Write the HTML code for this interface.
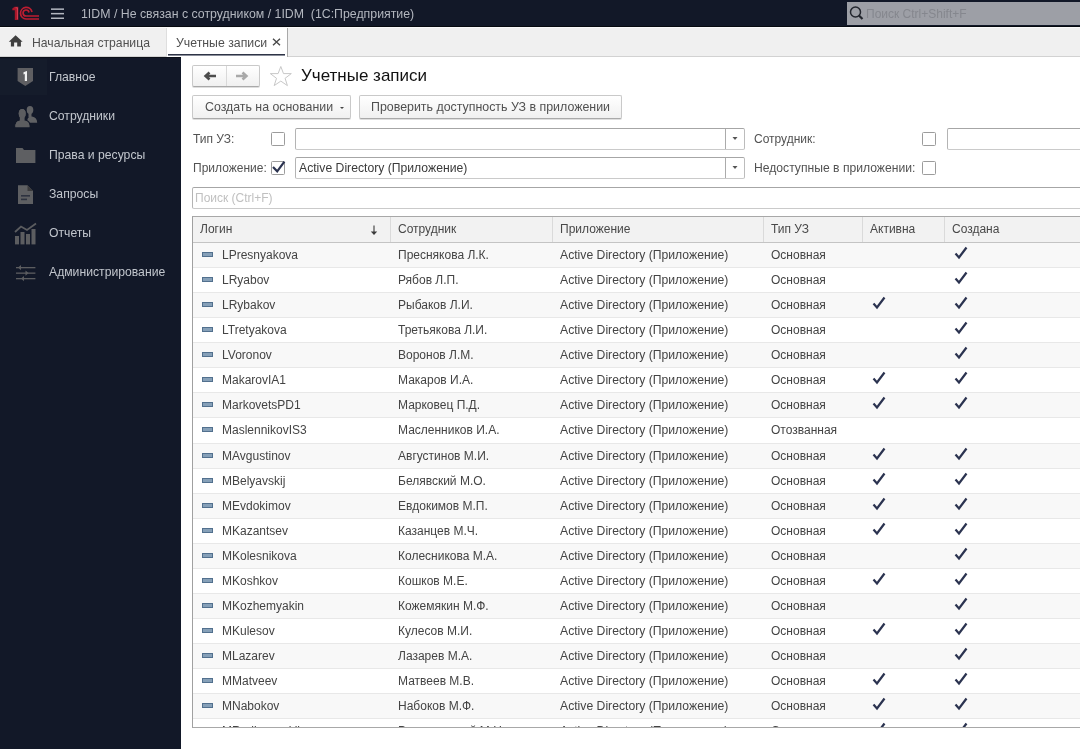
<!DOCTYPE html>
<html><head><meta charset="utf-8">
<style>
*{box-sizing:border-box;margin:0;padding:0}
html,body{width:1080px;height:749px;overflow:hidden;background:#fff;font-family:"Liberation Sans",sans-serif;font-size:12px;color:#525252}
.abs{position:absolute}
#top{position:absolute;left:0;top:0;width:1080px;height:27px;background:#121828;border-bottom:1px solid #070a10}
#tabs{position:absolute;left:0;top:27px;width:1080px;height:30px;background:#f0f0f0;border-top:1px solid #fafafa;border-bottom:1px solid #d2d2d2}
#side{position:absolute;left:0;top:57px;width:181px;height:692px;background:#121828;border-top:1px solid #0b0f18}
.t{position:absolute;white-space:pre;line-height:14px}
.si{position:absolute;left:49px;color:#c2c6cd;font-size:12.2px;white-space:pre;line-height:14px}
.btn{position:absolute;border:1px solid #c9c9c9;border-bottom-color:#a9a9a9;border-radius:2px;background:linear-gradient(#ffffff,#f0f0f0);box-shadow:0 1px 0 #dedede}
.cb{position:absolute;width:14px;height:14px;border:1px solid #9c9c9c;border-radius:1.5px;background:#fff}
.inp{position:absolute;border:1px solid #b0b0b0;border-color:#a6a6a6 #bcbcbc #cacaca #b4b4b4;border-radius:2px;background:#fff}
#grid{position:absolute;left:192px;top:216px;width:900px;height:512px;border:1px solid #a8a8a8;border-left-color:#a0a0a0;border-right:none;overflow:hidden}
.hdr{position:absolute;left:0;top:0;width:900px;height:26px;background:#f2f2f2;border-bottom:1px solid #c4c4c4}
.hc{position:absolute;top:0;height:25px;border-left:1px solid #dadada;line-height:24px;padding-left:7px;color:#484848;white-space:pre}
.row{position:absolute;left:0;width:900px;height:25px;border-bottom:1px solid #e8e8e8}
.row.odd{background:#f8f8f8}
.c{position:absolute;top:0;line-height:24px;white-space:pre;color:#444}
.ic{position:absolute;left:9px;top:9px;width:11px;height:4.5px;background:#86a0b8;border:1px solid #52708e}
.chk{position:absolute;top:3px}
.t,.c,.si,.hc{will-change:transform}
.c1{left:29px}.c2{left:205px}.c3{left:367px;font-size:12.2px}.c4{left:578px}.c5{left:679px}.c6{left:761px}
</style></head><body>
<div id="top">
  <svg class="abs" style="left:0;top:0" width="80" height="27" viewBox="0 0 80 27">
    <path d="M12.3 8.6 L14.6 6.8 L18.3 6.8 L18.3 20 L14.8 20 L14.8 10.2 L12.3 10.2 Z" fill="#a8162a"/>
    <path d="M15.5 7.8 L17.4 7.8 L17.4 19.3" fill="none" stroke="#d8455a" stroke-width="0.9"/>
    <g fill="none" stroke="#bd1d31" stroke-width="1.7">
      <path d="M32 12 A5.8 5.8 0 1 0 26 19 L39 19"/>
      <path d="M29 12.5 A3 3 0 1 0 26 16 L39 16"/>
    </g>
    <g fill="#b3b7c0"><rect x="51" y="8.4" width="13" height="1.5"/><rect x="51" y="12.9" width="13" height="1.5"/><rect x="51" y="17.5" width="13" height="1.5"/></g>
  </svg>
  <div class="t" style="left:81px;top:7px;color:#b3b7bf;font-size:12.33px">1IDM / Не связан с сотрудником / 1IDM  (1С:Предприятие)</div>
  <div class="abs" style="left:847px;top:2px;width:233px;height:23px;background:#9d9fa6"></div>
  <svg class="abs" style="left:848px;top:5px" width="18" height="17" viewBox="0 0 18 17">
    <circle cx="7.5" cy="7" r="5" fill="none" stroke="#23262e" stroke-width="1.5"/>
    <path d="M11 10.5 L14.5 14" stroke="#23262e" stroke-width="2.2"/>
  </svg>
  <div class="t" style="left:866px;top:7px;color:#85878e;font-size:12px">Поиск Ctrl+Shift+F</div>
</div>
<div id="tabs">
  <svg class="abs" style="left:0;top:-1px" width="30" height="30" viewBox="0 27 30 30">
    <path d="M15.6 35.2 L22.6 41.8 L20.9 41.8 L20.9 46.4 L17.2 46.4 L17.2 42.4 L14.1 42.4 L14.1 46.4 L10.9 46.4 L10.9 41.8 L8.8 41.8 Z" fill="#3f3f3f"/>
  </svg>
  <div class="t" style="left:32px;top:8px;color:#505050;font-size:12.2px">Начальная страница</div>
  <div class="abs" style="left:166px;top:0px;width:122px;height:29px;background:#fff;border-left:1px solid #dedede;border-right:1px solid #a9a9a9"></div>
  <div class="abs" style="left:168px;top:26px;width:117px;height:1px;background:#2e3446"></div><div class="abs" style="left:168px;top:27px;width:117px;height:1px;background:#8a8e9a"></div>
  <div class="t" style="left:176px;top:8px;color:#505050;font-size:12.3px">Учетные записи</div>
  <svg class="abs" style="left:272px;top:10px" width="9" height="8" viewBox="0 0 9 8">
    <path d="M1 0.8 L8 7.2 M8 0.8 L1 7.2" stroke="#4a4a4a" stroke-width="1.4"/>
  </svg>
</div>
<div id="side">
  <div class="abs" style="left:0;top:1px;width:47px;height:36px;background:#151c2b"></div>
  <svg class="abs" style="left:0;top:-1px" width="50" height="240" viewBox="0 57 50 240">
    <path d="M17.6 68 L33 68 L33 81 L25.3 86 L17.6 81 Z" fill="#5f5f62"/>
    <path d="M23.5 72.2 L26.8 71 L27 71 L27 81 L24.8 81 L24.8 74 L23.5 74.4 Z" fill="#f2f2f2"/>
    <g fill="#606164">
      <ellipse cx="30" cy="110" rx="3.3" ry="4.1"/>
      <rect x="28.5" y="113" width="3" height="4"/>
      <path d="M27 122.8 Q27 117.5 30 116.5 L32 116.5 Q37.2 117.5 37.2 122.8 Z"/>
    </g>
    <g fill="#5c5d60" stroke="#121828" stroke-width="1.3">
      <ellipse cx="22.2" cy="113.6" rx="4.1" ry="5.2"/>
      <path d="M14.6 127.5 Q14.6 121.2 19 120.2 L25.5 120.2 Q30.2 121.2 30.2 127.5 Z"/>
    </g>
    <ellipse cx="22.2" cy="113.6" rx="3.5" ry="4.6" fill="#5c5d60"/>
    <rect x="19.8" y="116.5" width="4.8" height="4.5" fill="#5c5d60"/>
    <path d="M15.3 127.3 Q15.3 121.6 19 120.8 L25.5 120.8 Q29.5 121.6 29.5 127.3 Z" fill="#5c5d60"/>
    <path d="M16 148 L22.5 148 L24 150 L35.4 150 L35.4 163 L16 163 Z" fill="#5e5f62"/>
    <path d="M18 185.3 L27.5 185.3 L33 191 L33 204 L18 204 Z" fill="#5e5f62"/>
    <path d="M27.5 185.3 L27.5 191 L33 191 Z" fill="#3a3a3c"/>
    <rect x="21" y="195" width="9" height="1.6" fill="#2e3340"/>
    <rect x="21" y="198.6" width="6" height="1.6" fill="#2e3340"/>
    <g fill="#5c5d60">
      <rect x="15" y="236" width="4" height="8.4"/>
      <rect x="20.5" y="232" width="4" height="12.4"/>
      <rect x="26" y="234" width="4" height="10.4"/>
      <rect x="31.5" y="229" width="4" height="15.4"/>
    </g>
    <path d="M15 232 L21 226.5 L27 230 L36 223.5" fill="none" stroke="#5c5d60" stroke-width="1.8"/>
    <g fill="#5c5d60">
      <rect x="16" y="267" width="19.4" height="1.3"/>
      <rect x="16" y="272.5" width="19.4" height="1.3"/>
      <rect x="16" y="278" width="19.4" height="1.3"/>
      <path d="M18 267.6 L21 265 L21 270.2 Z"/>
      <path d="M28.5 273.1 L25.5 270.5 L25.5 275.7 Z"/>
      <path d="M21 278.6 L24 276 L24 281.2 Z"/>
    </g>
  </svg>
  <div class="si" style="top:12px">Главное</div>
  <div class="si" style="top:51px">Сотрудники</div>
  <div class="si" style="top:90px">Права и ресурсы</div>
  <div class="si" style="top:129px">Запросы</div>
  <div class="si" style="top:168px">Отчеты</div>
  <div class="si" style="top:207px">Администрирование</div>
</div>

<!-- content -->
<div class="btn" style="left:192px;top:65px;width:68px;height:22px"></div>
<div class="abs" style="left:226px;top:66px;width:1px;height:20px;background:#d9d9d9"></div>
<svg class="abs" style="left:200px;top:68px" width="54" height="16" viewBox="200 68 54 16">
  <path d="M216 76 L207 76 M209.5 72.5 L205.6 76 L209.5 79.5" fill="none" stroke="#4d4d4d" stroke-width="2.6"/>
  <path d="M236 76 L245 76 M242.5 72.5 L246.4 76 L242.5 79.5" fill="none" stroke="#a9a9a9" stroke-width="2.6"/>
</svg>
<svg class="abs" style="left:268px;top:64px" width="26" height="24" viewBox="268 64 26 24">
  <path d="M280.8 66.5 L283.5 73.6 L291.3 73.6 L285.1 78.3 L287.4 85.6 L280.8 81.1 L274.2 85.6 L276.5 78.3 L270.3 73.6 L278.1 73.6 Z" fill="none" stroke="#c8c8c8" stroke-width="1"/>
</svg>
<div class="t" style="left:301px;top:66px;color:#111;font-size:17px;line-height:19px">Учетные записи</div>

<div class="btn" style="left:192px;top:95px;width:159px;height:24px"></div>
<div class="t" style="left:205px;top:100px;color:#505050;font-size:12.35px">Создать на основании</div>
<svg class="abs" style="left:339px;top:106px" width="6" height="4"><path d="M1 1 L5 1 L3 3 Z" fill="#444"/></svg>
<div class="btn" style="left:359px;top:95px;width:263px;height:24px"></div>
<div class="t" style="left:371px;top:100px;color:#505050;font-size:12.4px">Проверить доступность УЗ в приложении</div>

<div class="t" style="left:193px;top:132px">Тип УЗ:</div>
<div class="cb" style="left:271px;top:132px"></div>
<div class="inp" style="left:295px;top:128px;width:450px;height:22px"></div>
<div class="abs" style="left:725px;top:129px;width:1px;height:20px;background:#ababab"></div>
<svg class="abs" style="left:732px;top:137px" width="6" height="4"><path d="M0.5 0 L5.5 0 L3 3 Z" fill="#555"/></svg>
<div class="t" style="left:754px;top:132px">Сотрудник:</div>
<div class="cb" style="left:922px;top:132px"></div>
<div class="inp" style="left:947px;top:128px;width:150px;height:22px"></div>

<div class="t" style="left:193px;top:161px">Приложение:</div>
<div class="cb" style="left:271px;top:161px"></div>
<svg class="abs" style="left:271px;top:158px" width="16" height="18" viewBox="0 0 16 18">
  <path d="M2 9 L6.2 13.3 L13.4 3.6" fill="none" stroke="#2b3350" stroke-width="2.2"/>
</svg>
<div class="inp" style="left:295px;top:157px;width:450px;height:22px"></div>
<div class="abs" style="left:725px;top:158px;width:1px;height:20px;background:#ababab"></div>
<svg class="abs" style="left:732px;top:166px" width="6" height="4"><path d="M0.5 0 L5.5 0 L3 3 Z" fill="#555"/></svg>
<div class="t" style="left:299px;top:161px;color:#3a3a3a;font-size:12.2px">Active Directory (Приложение)</div>
<div class="t" style="left:754px;top:161px;font-size:12.15px">Недоступные в приложении:</div>
<div class="cb" style="left:922px;top:161px"></div>

<div class="inp" style="left:192px;top:187px;width:900px;height:22px"></div>
<div class="t" style="left:195px;top:191px;color:#c0c0c0">Поиск (Ctrl+F)</div>

<div id="grid">
  <div class="hdr">
    <div class="hc" style="left:0;border-left:none;width:198px">Логин</div>
    <svg class="abs" style="left:177px;top:8px" width="8" height="11" viewBox="0 0 8 11"><path d="M4 0.5 L4 7" stroke="#3a3a3a" stroke-width="1.1"/><path d="M0.8 6.5 L7.2 6.5 L4 10 Z" fill="#3a3a3a"/></svg>
    <div class="hc" style="left:197px;width:162px">Сотрудник</div>
    <div class="hc" style="left:359px;width:211px">Приложение</div>
    <div class="hc" style="left:570px;width:99px">Тип УЗ</div>
    <div class="hc" style="left:669px;width:82px">Активна</div>
    <div class="hc" style="left:751px;width:150px">Создана</div>
  </div>
<div class="row odd" style="top:26px"><i class="ic"></i><span class="c c1">LPresnyakova</span><span class="c c2">Преснякова Л.К.</span><span class="c c3">Active Directory (Приложение)</span><span class="c c4">Основная</span><span class="c c6"><svg class="chk" width="14" height="14" viewBox="0 0 14 14"><path d="M1.5 7.5 L5 11.5 L12.5 1.5" fill="none" stroke="#2b3350" stroke-width="2.2"/></svg></span></div>
<div class="row" style="top:51px"><i class="ic"></i><span class="c c1">LRyabov</span><span class="c c2">Рябов Л.П.</span><span class="c c3">Active Directory (Приложение)</span><span class="c c4">Основная</span><span class="c c6"><svg class="chk" width="14" height="14" viewBox="0 0 14 14"><path d="M1.5 7.5 L5 11.5 L12.5 1.5" fill="none" stroke="#2b3350" stroke-width="2.2"/></svg></span></div>
<div class="row odd" style="top:76px"><i class="ic"></i><span class="c c1">LRybakov</span><span class="c c2">Рыбаков Л.И.</span><span class="c c3">Active Directory (Приложение)</span><span class="c c4">Основная</span><span class="c c5"><svg class="chk" width="14" height="14" viewBox="0 0 14 14"><path d="M1.5 7.5 L5 11.5 L12.5 1.5" fill="none" stroke="#2b3350" stroke-width="2.2"/></svg></span><span class="c c6"><svg class="chk" width="14" height="14" viewBox="0 0 14 14"><path d="M1.5 7.5 L5 11.5 L12.5 1.5" fill="none" stroke="#2b3350" stroke-width="2.2"/></svg></span></div>
<div class="row" style="top:101px"><i class="ic"></i><span class="c c1">LTretyakova</span><span class="c c2">Третьякова Л.И.</span><span class="c c3">Active Directory (Приложение)</span><span class="c c4">Основная</span><span class="c c6"><svg class="chk" width="14" height="14" viewBox="0 0 14 14"><path d="M1.5 7.5 L5 11.5 L12.5 1.5" fill="none" stroke="#2b3350" stroke-width="2.2"/></svg></span></div>
<div class="row odd" style="top:126px"><i class="ic"></i><span class="c c1">LVoronov</span><span class="c c2">Воронов Л.М.</span><span class="c c3">Active Directory (Приложение)</span><span class="c c4">Основная</span><span class="c c6"><svg class="chk" width="14" height="14" viewBox="0 0 14 14"><path d="M1.5 7.5 L5 11.5 L12.5 1.5" fill="none" stroke="#2b3350" stroke-width="2.2"/></svg></span></div>
<div class="row" style="top:151px"><i class="ic"></i><span class="c c1">MakarovIA1</span><span class="c c2">Макаров И.А.</span><span class="c c3">Active Directory (Приложение)</span><span class="c c4">Основная</span><span class="c c5"><svg class="chk" width="14" height="14" viewBox="0 0 14 14"><path d="M1.5 7.5 L5 11.5 L12.5 1.5" fill="none" stroke="#2b3350" stroke-width="2.2"/></svg></span><span class="c c6"><svg class="chk" width="14" height="14" viewBox="0 0 14 14"><path d="M1.5 7.5 L5 11.5 L12.5 1.5" fill="none" stroke="#2b3350" stroke-width="2.2"/></svg></span></div>
<div class="row odd" style="top:176px"><i class="ic"></i><span class="c c1">MarkovetsPD1</span><span class="c c2">Марковец П.Д.</span><span class="c c3">Active Directory (Приложение)</span><span class="c c4">Основная</span><span class="c c5"><svg class="chk" width="14" height="14" viewBox="0 0 14 14"><path d="M1.5 7.5 L5 11.5 L12.5 1.5" fill="none" stroke="#2b3350" stroke-width="2.2"/></svg></span><span class="c c6"><svg class="chk" width="14" height="14" viewBox="0 0 14 14"><path d="M1.5 7.5 L5 11.5 L12.5 1.5" fill="none" stroke="#2b3350" stroke-width="2.2"/></svg></span></div>
<div class="row" style="top:201px;height:26px"><i class="ic"></i><span class="c c1">MaslennikovIS3</span><span class="c c2">Масленников И.А.</span><span class="c c3">Active Directory (Приложение)</span><span class="c c4">Отозванная</span></div>
<div class="row odd" style="top:227px"><i class="ic"></i><span class="c c1">MAvgustinov</span><span class="c c2">Августинов М.И.</span><span class="c c3">Active Directory (Приложение)</span><span class="c c4">Основная</span><span class="c c5"><svg class="chk" width="14" height="14" viewBox="0 0 14 14"><path d="M1.5 7.5 L5 11.5 L12.5 1.5" fill="none" stroke="#2b3350" stroke-width="2.2"/></svg></span><span class="c c6"><svg class="chk" width="14" height="14" viewBox="0 0 14 14"><path d="M1.5 7.5 L5 11.5 L12.5 1.5" fill="none" stroke="#2b3350" stroke-width="2.2"/></svg></span></div>
<div class="row" style="top:252px"><i class="ic"></i><span class="c c1">MBelyavskij</span><span class="c c2">Белявский М.О.</span><span class="c c3">Active Directory (Приложение)</span><span class="c c4">Основная</span><span class="c c5"><svg class="chk" width="14" height="14" viewBox="0 0 14 14"><path d="M1.5 7.5 L5 11.5 L12.5 1.5" fill="none" stroke="#2b3350" stroke-width="2.2"/></svg></span><span class="c c6"><svg class="chk" width="14" height="14" viewBox="0 0 14 14"><path d="M1.5 7.5 L5 11.5 L12.5 1.5" fill="none" stroke="#2b3350" stroke-width="2.2"/></svg></span></div>
<div class="row odd" style="top:277px"><i class="ic"></i><span class="c c1">MEvdokimov</span><span class="c c2">Евдокимов М.П.</span><span class="c c3">Active Directory (Приложение)</span><span class="c c4">Основная</span><span class="c c5"><svg class="chk" width="14" height="14" viewBox="0 0 14 14"><path d="M1.5 7.5 L5 11.5 L12.5 1.5" fill="none" stroke="#2b3350" stroke-width="2.2"/></svg></span><span class="c c6"><svg class="chk" width="14" height="14" viewBox="0 0 14 14"><path d="M1.5 7.5 L5 11.5 L12.5 1.5" fill="none" stroke="#2b3350" stroke-width="2.2"/></svg></span></div>
<div class="row" style="top:302px"><i class="ic"></i><span class="c c1">MKazantsev</span><span class="c c2">Казанцев М.Ч.</span><span class="c c3">Active Directory (Приложение)</span><span class="c c4">Основная</span><span class="c c5"><svg class="chk" width="14" height="14" viewBox="0 0 14 14"><path d="M1.5 7.5 L5 11.5 L12.5 1.5" fill="none" stroke="#2b3350" stroke-width="2.2"/></svg></span><span class="c c6"><svg class="chk" width="14" height="14" viewBox="0 0 14 14"><path d="M1.5 7.5 L5 11.5 L12.5 1.5" fill="none" stroke="#2b3350" stroke-width="2.2"/></svg></span></div>
<div class="row odd" style="top:327px"><i class="ic"></i><span class="c c1">MKolesnikova</span><span class="c c2">Колесникова М.А.</span><span class="c c3">Active Directory (Приложение)</span><span class="c c4">Основная</span><span class="c c6"><svg class="chk" width="14" height="14" viewBox="0 0 14 14"><path d="M1.5 7.5 L5 11.5 L12.5 1.5" fill="none" stroke="#2b3350" stroke-width="2.2"/></svg></span></div>
<div class="row" style="top:352px"><i class="ic"></i><span class="c c1">MKoshkov</span><span class="c c2">Кошков М.Е.</span><span class="c c3">Active Directory (Приложение)</span><span class="c c4">Основная</span><span class="c c5"><svg class="chk" width="14" height="14" viewBox="0 0 14 14"><path d="M1.5 7.5 L5 11.5 L12.5 1.5" fill="none" stroke="#2b3350" stroke-width="2.2"/></svg></span><span class="c c6"><svg class="chk" width="14" height="14" viewBox="0 0 14 14"><path d="M1.5 7.5 L5 11.5 L12.5 1.5" fill="none" stroke="#2b3350" stroke-width="2.2"/></svg></span></div>
<div class="row odd" style="top:377px"><i class="ic"></i><span class="c c1">MKozhemyakin</span><span class="c c2">Кожемякин М.Ф.</span><span class="c c3">Active Directory (Приложение)</span><span class="c c4">Основная</span><span class="c c6"><svg class="chk" width="14" height="14" viewBox="0 0 14 14"><path d="M1.5 7.5 L5 11.5 L12.5 1.5" fill="none" stroke="#2b3350" stroke-width="2.2"/></svg></span></div>
<div class="row" style="top:402px"><i class="ic"></i><span class="c c1">MKulesov</span><span class="c c2">Кулесов М.И.</span><span class="c c3">Active Directory (Приложение)</span><span class="c c4">Основная</span><span class="c c5"><svg class="chk" width="14" height="14" viewBox="0 0 14 14"><path d="M1.5 7.5 L5 11.5 L12.5 1.5" fill="none" stroke="#2b3350" stroke-width="2.2"/></svg></span><span class="c c6"><svg class="chk" width="14" height="14" viewBox="0 0 14 14"><path d="M1.5 7.5 L5 11.5 L12.5 1.5" fill="none" stroke="#2b3350" stroke-width="2.2"/></svg></span></div>
<div class="row odd" style="top:427px"><i class="ic"></i><span class="c c1">MLazarev</span><span class="c c2">Лазарев М.А.</span><span class="c c3">Active Directory (Приложение)</span><span class="c c4">Основная</span><span class="c c6"><svg class="chk" width="14" height="14" viewBox="0 0 14 14"><path d="M1.5 7.5 L5 11.5 L12.5 1.5" fill="none" stroke="#2b3350" stroke-width="2.2"/></svg></span></div>
<div class="row" style="top:452px"><i class="ic"></i><span class="c c1">MMatveev</span><span class="c c2">Матвеев М.В.</span><span class="c c3">Active Directory (Приложение)</span><span class="c c4">Основная</span><span class="c c5"><svg class="chk" width="14" height="14" viewBox="0 0 14 14"><path d="M1.5 7.5 L5 11.5 L12.5 1.5" fill="none" stroke="#2b3350" stroke-width="2.2"/></svg></span><span class="c c6"><svg class="chk" width="14" height="14" viewBox="0 0 14 14"><path d="M1.5 7.5 L5 11.5 L12.5 1.5" fill="none" stroke="#2b3350" stroke-width="2.2"/></svg></span></div>
<div class="row odd" style="top:477px"><i class="ic"></i><span class="c c1">MNabokov</span><span class="c c2">Набоков М.Ф.</span><span class="c c3">Active Directory (Приложение)</span><span class="c c4">Основная</span><span class="c c5"><svg class="chk" width="14" height="14" viewBox="0 0 14 14"><path d="M1.5 7.5 L5 11.5 L12.5 1.5" fill="none" stroke="#2b3350" stroke-width="2.2"/></svg></span><span class="c c6"><svg class="chk" width="14" height="14" viewBox="0 0 14 14"><path d="M1.5 7.5 L5 11.5 L12.5 1.5" fill="none" stroke="#2b3350" stroke-width="2.2"/></svg></span></div>
<div class="row" style="top:502px"><i class="ic"></i><span class="c c1">MRodionovskij</span><span class="c c2">Родионовский М.Н.</span><span class="c c3">Active Directory (Приложение)</span><span class="c c4">Основная</span><span class="c c5"><svg class="chk" width="14" height="14" viewBox="0 0 14 14"><path d="M1.5 7.5 L5 11.5 L12.5 1.5" fill="none" stroke="#2b3350" stroke-width="2.2"/></svg></span><span class="c c6"><svg class="chk" width="14" height="14" viewBox="0 0 14 14"><path d="M1.5 7.5 L5 11.5 L12.5 1.5" fill="none" stroke="#2b3350" stroke-width="2.2"/></svg></span></div>
</div>
</body></html>
